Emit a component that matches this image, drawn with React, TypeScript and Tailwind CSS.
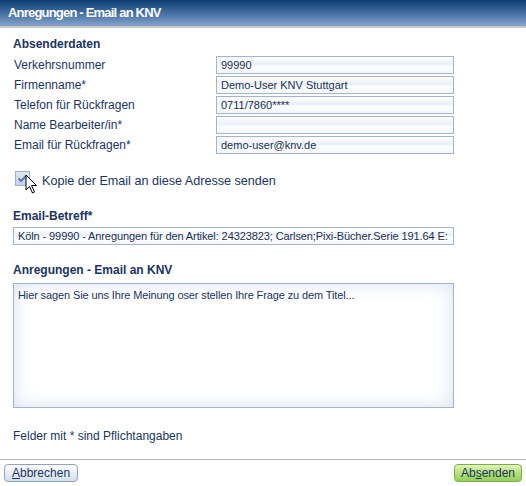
const fields = [
  { label: "Verkehrsnummer", value: "99990" },
  { label: "Firmenname*", value: "Demo-User KNV Stuttgart" },
  { label: "Telefon für Rückfragen", value: "0711/7860****" },
  { label: "Name Bearbeiter/in*", value: "" },
  { label: "Email für Rückfragen*", value: "demo-user@knv.de" },
];

const inputClass =
  "h-[18px] border border-[#a3b5cc] bg-[linear-gradient(#ffffff,#eaf0f8_45%,#ffffff_60%,#f3f6fb)] px-[4px] text-[11px] leading-[16px] text-[#1c2f52]";

function Cursor() {
  return (
    <svg
      className="absolute left-[10px] top-[3px]"
      width="14"
      height="21"
      viewBox="0 0 14 21"
    >
      <path
        d="M1 1 L1 16 L4.5 12.5 L7.5 19 L9.5 18 L6.5 11.5 L11.5 11.5 Z"
        fill="#ffffff"
        stroke="#000000"
        strokeWidth="1"
        strokeLinejoin="miter"
      />
    </svg>
  );
}

export default function App() {
  return (
    <div className="flex h-[486px] w-[526px] flex-col bg-white font-['Liberation_Sans',Arial,sans-serif] text-[#1c3461]">
      <div className="flex h-[28px] items-center border-b-2 border-[#c8c8c8] bg-[linear-gradient(#0d3c72,#4a73a6_55%,#86a5cb)] px-[8px]">
        <h1 className="text-[13px] font-bold tracking-[-0.8px] text-white">
          Anregungen - Email an KNV
        </h1>
      </div>

      <div className="flex flex-1 flex-col px-[13px]">
        <h2 className="mt-[9px] text-[12px] font-bold leading-[14px]">
          Absenderdaten
        </h2>

        <div className="mt-[5px] flex flex-col gap-[2px]">
          {fields.map((f) => (
            <div key={f.label} className="flex items-center">
              <span className="w-[203px] pl-[1px] text-[12px] leading-[14px]">
                {f.label}
              </span>
              <div className={`${inputClass} w-[238px]`}>{f.value}</div>
            </div>
          ))}
        </div>

        <div className="mt-[17px] flex items-start gap-[12px]">
          <div className="relative ml-[2px] h-[15px] w-[15px]">
            <div className="flex h-[15px] w-[15px] items-center justify-center border border-[#9fb3cc] bg-[linear-gradient(#dde7f3,#c3d3e8)]">
              <svg width="11" height="9" viewBox="0 0 11 9">
                <path
                  d="M1.5 4.5 L4 7 L9.5 1.5"
                  fill="none"
                  stroke="#5d7aa5"
                  strokeWidth="2"
                />
              </svg>
            </div>
            <Cursor />
          </div>
          <span className="pt-[3px] text-[12.6px] leading-[15px]">
            Kopie der Email an diese Adresse senden
          </span>
        </div>

        <h2 className="mt-[20px] text-[12px] font-bold leading-[14px]">
          Email-Betreff*
        </h2>
        <div
          className={`${inputClass} mt-[4px] w-[441px] overflow-hidden whitespace-nowrap tracking-[-0.1px]`}
        >
          Köln - 99990 - Anregungen für den Artikel: 24323823; Carlsen;Pixi-Bücher.Serie 191.64 E:
        </div>

        <h2 className="mt-[18px] text-[12px] font-bold leading-[14px]">
          Anregungen - Email an KNV
        </h2>
        <div className="mt-[6px] h-[125px] w-[441px] border border-[#a3b5cc] bg-white px-[4px] py-[5px] text-[11px] leading-[13px] tracking-[-0.12px] shadow-[inset_0_0_18px_#d6e1f1]">
          Hier sagen Sie uns Ihre Meinung oser stellen Ihre Frage zu dem Titel...
        </div>

        <p className="mt-[21px] text-[12px] leading-[14px]">
          Felder mit * sind Pflichtangaben
        </p>
      </div>

      <div className="flex h-[27px] items-center justify-between border-t border-[#b4b4b4] px-[4px]">
        <button className="h-[18px] rounded-[4px] border border-[#8fa3be] bg-[linear-gradient(#ffffff,#e6edf6_50%,#d3dfee)] px-[7px] text-[12px] leading-[15px] text-[#1c3461]">
          <span className="underline">A</span>bbrechen
        </button>
        <button className="h-[18px] rounded-[4px] border border-[#78ad48] bg-[linear-gradient(#e2f5b8,#b3e07a_50%,#93cf5a)] px-[6px] text-[12px] leading-[15px] text-[#1c3461]">
          Ab<span className="underline">s</span>enden
        </button>
      </div>
    </div>
  );
}
